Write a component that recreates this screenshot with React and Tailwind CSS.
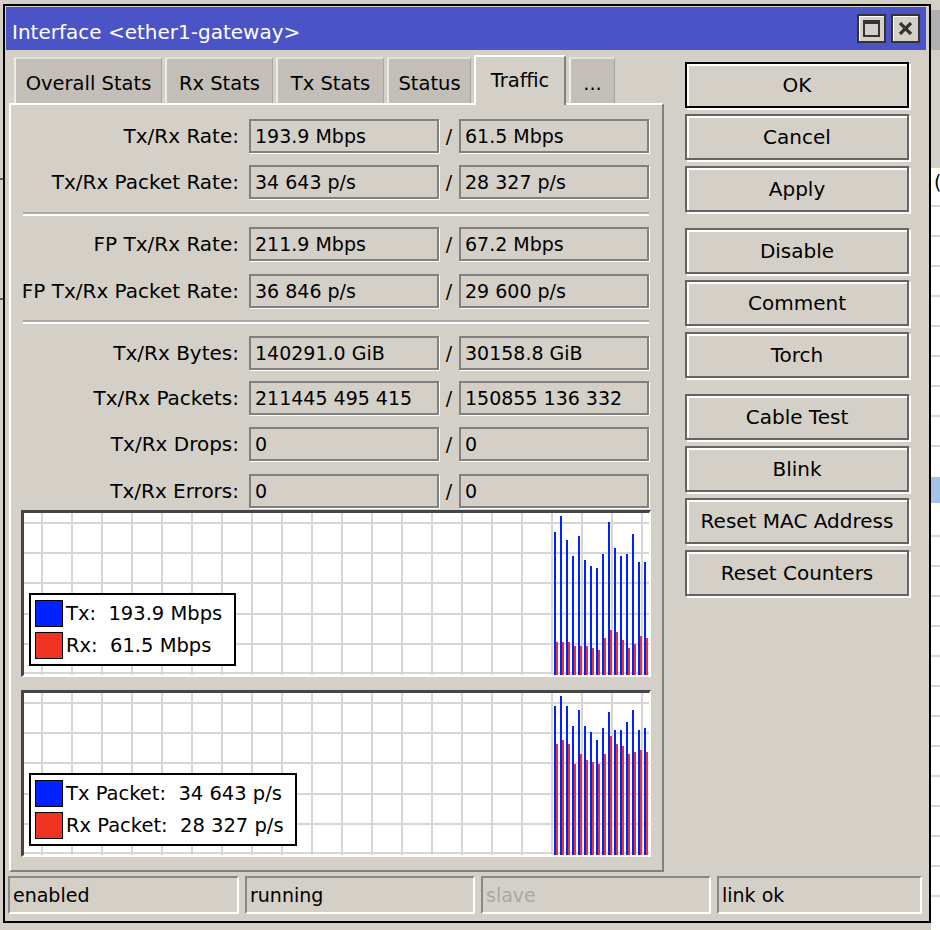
import React from 'react';

const font = { fontFamily: '"DejaVu Sans", Verdana, sans-serif' };

const rows1 = [
  { label: 'Tx/Rx Rate:', a: '193.9 Mbps', b: '61.5 Mbps' },
  { label: 'Tx/Rx Packet Rate:', a: '34 643 p/s', b: '28 327 p/s' },
];
const rows2 = [
  { label: 'FP Tx/Rx Rate:', a: '211.9 Mbps', b: '67.2 Mbps' },
  { label: 'FP Tx/Rx Packet Rate:', a: '36 846 p/s', b: '29 600 p/s' },
];
const rows3 = [
  { label: 'Tx/Rx Bytes:', a: '140291.0 GiB', b: '30158.8 GiB' },
  { label: 'Tx/Rx Packets:', a: '211445 495 415', b: '150855 136 332' },
  { label: 'Tx/Rx Drops:', a: '0', b: '0' },
  { label: 'Tx/Rx Errors:', a: '0', b: '0' },
];

// bar tops in graph-inner coordinates (inner height 162)
const rateTx = [532, 516, 540, 556, 536, 560, 566, 568, 554, 522, 548, 556, 554, 534, 562, 562].map((y) => y - 513);
const rateRx = [642, 642, 642, 646, 646, 646, 648, 650, 638, 630, 632, 640, 648, 644, 636, 638].map((y) => y - 513);
const pktTx = [706, 696, 706, 726, 710, 726, 732, 740, 728, 712, 730, 730, 722, 710, 730, 728].map((y) => y - 693);
const pktRx = [744, 740, 744, 764, 754, 760, 762, 764, 754, 736, 744, 746, 754, 752, 750, 752].map((y) => y - 693);

const tabs = [
  { name: 'Overall Stats', w: 'w-[148px]' },
  { name: 'Rx Stats', w: 'w-[108px]' },
  { name: 'Tx Stats', w: 'w-[108px]' },
  { name: 'Status', w: 'w-[84px]' },
];

function Field({ children }) {
  return (
    <div className="w-[190px] h-[34px] border-2 border-[#808080] shadow-[1px_1px_0_#fff] flex items-center pl-[4px] whitespace-pre text-[19px]">
      {children}
    </div>
  );
}

function Row({ row, className }) {
  return (
    <div className={`flex items-center ${className}`}>
      <div className="w-[228px] text-right text-[20px]">{row.label}</div>
      <div className="ml-[10px]">
        <Field>{row.a}</Field>
      </div>
      <div className="w-[20px] text-center">/</div>
      <Field>{row.b}</Field>
    </div>
  );
}

function Separator({ className }) {
  return <div className={`ml-[12px] w-[626px] h-[2px] bg-[#a8a8a8] shadow-[0_2px_0_#fff] ${className}`} />;
}

function Chart({ tx, rx }) {
  const verticals = Array.from({ length: 21 }, (_, i) => 18 + i * 30);
  const horizontals = [10, 40, 70, 101, 131, 160];
  return (
    <svg width="625" height="162" className="block">
      <rect width="625" height="162" fill="#ffffff" />
      {verticals.map((x) => (
        <line key={'v' + x} x1={x} x2={x} y1="0" y2="162" stroke="#d6d6d6" strokeWidth="2" />
      ))}
      {horizontals.map((y) => (
        <line key={'h' + y} x1="0" x2="625" y1={y} y2={y} stroke="#d6d6d6" strokeWidth="2" />
      ))}
      {tx.map((top, i) => (
        <g key={i}>
          <rect x={530 + i * 6} y={top} width="2" height={162 - top} fill="#0022ff" />
          <rect x={532 + i * 6} y={rx[i]} width="2" height={162 - rx[i]} fill="#ee3322" />
        </g>
      ))}
    </svg>
  );
}

function Graph({ tx, rx, legend, legendW, className }) {
  return (
    <div className={`ml-[10px] w-[630px] h-[167px] border-t-[3px] border-l-[3px] border-t-[#454545] border-l-[#454545] border-b-2 border-r-2 border-b-white border-r-white relative ${className}`}>
      <Chart tx={tx} rx={rx} />
      <div className={`absolute left-[5px] top-[80px] h-[73px] ${legendW} bg-white border-2 border-black flex flex-col justify-center gap-[4px] pl-[4px] text-[19.5px]`}>
        {legend.map((l) => (
          <div key={l.text} className="flex items-center h-[28px]">
            <div className={`w-[28px] h-[27px] border-[1.5px] border-black ${l.color}`} />
            <span className="ml-[3px] whitespace-pre">{l.text}</span>
          </div>
        ))}
      </div>
    </div>
  );
}

function Button({ children, primary, className = '' }) {
  return (
    <div
      className={`h-[46px] w-[224px] flex items-center justify-center text-[20px] border-2 ${
        primary ? 'border-black' : 'border-[#646464]'
      } shadow-[inset_2px_2px_0_#fff,2px_2px_0_#fff] ${className}`}
    >
      {children}
    </div>
  );
}

function StatusCell({ children, w, muted }) {
  return (
    <div
      className={`${w} h-[38px] border-t-2 border-l-2 border-[#888888] border-b-2 border-r-2 border-b-white border-r-white flex items-center pl-[3px] ${
        muted ? 'text-[#a8a8a8]' : 'text-black'
      }`}
    >
      {children}
    </div>
  );
}

export default function App() {
  const bgLines = [205, 235, 265, 295, 325, 355, 385, 415, 445, 535, 565, 595, 625, 655, 685, 715, 745, 775, 805, 835, 865, 895];
  return (
    <div className="w-[940px] h-[930px] bg-[#d4d0c8] flex overflow-hidden text-[19px] text-black" style={font}>
      {/* background window, left edge */}
      <div className="w-[3px] h-full flex flex-col">
        <div className="h-[178px]" />
        <div className="h-[2px] bg-[#606060]" />
        <div className="h-[118px]" />
        <div className="h-[2px] bg-[#606060]" />
      </div>

      {/* main window */}
      <div className="mt-[4px] w-[928px] h-[919px] border-2 border-black p-[1px] flex flex-col">
        {/* title bar */}
        <div className="h-[43px] mr-[2px] bg-[#4a54c7] flex items-center justify-between pl-[6px] pr-[6px]">
          <span className="text-white text-[20px] mt-[6px]">Interface &lt;ether1-gateway&gt;</span>
          <div className="flex gap-[5px]">
            <div className="w-[29px] h-[29px] bg-[#d4d0c8] border-2 border-[#333] shadow-[inset_1px_1px_0_#fff] flex items-center justify-center">
              <div className="w-[17px] h-[17px] border-2 border-t-[4px] border-[#333]" />
            </div>
            <div className="w-[29px] h-[29px] bg-[#d4d0c8] border-2 border-[#333] shadow-[inset_1px_1px_0_#fff] flex items-center justify-center">
              <svg width="15" height="13" viewBox="0 0 15 13">
                <path d="M2 1 L13 12 M13 1 L2 12" stroke="#333" strokeWidth="3.2" />
              </svg>
            </div>
          </div>
        </div>

        {/* body */}
        <div className="flex">
          {/* left column */}
          <div className="ml-[3px] w-[655px] flex flex-col">
            <div className="h-[53px] flex items-end pl-[5px] gap-[3px] text-[19.5px]">
              {tabs.map((t) => (
                <div
                  key={t.name}
                  className={`${t.w} h-[46px] bg-[#c3bfb8] border-t-2 border-l-2 border-t-[#e4e2dc] border-l-[#ecebe6] border-r border-r-[#a8a6a0] flex items-center justify-center pt-[5px]`}
                >
                  {t.name}
                </div>
              ))}
              <div className="w-[92px] h-[50px] bg-[#d4d0c8] border-t-2 border-l-2 border-white border-r-2 border-r-[#808080] flex items-start justify-center pt-[9px] -mb-[2px] relative z-10">
                Traffic
              </div>
              <div className="w-[46px] h-[46px] bg-[#c3bfb8] border-t-2 border-l-2 border-t-[#e4e2dc] border-l-[#ecebe6] border-r border-r-[#a8a6a0] flex items-center justify-center pt-[5px]">
                ...
              </div>
            </div>

            {/* panel */}
            <div className="h-[769px] border-2 border-t-white border-l-white border-r-[#808080] border-b-[#808080] flex flex-col">
              <Row row={rows1[0]} className="mt-[14px]" />
              <Row row={rows1[1]} className="mt-[12px]" />
              <Separator className="mt-[13px]" />
              <Row row={rows2[0]} className="mt-[13px]" />
              <Row row={rows2[1]} className="mt-[13px]" />
              <Separator className="mt-[12px]" />
              <Row row={rows3[0]} className="mt-[14px]" />
              <Row row={rows3[1]} className="mt-[11px]" />
              <Row row={rows3[2]} className="mt-[12px]" />
              <Row row={rows3[3]} className="mt-[13px]" />
              <Graph
                className="mt-[2px]"
                tx={rateTx}
                rx={rateRx}
                legendW="w-[207px]"
                legend={[
                  { color: 'bg-[#0022ff]', text: 'Tx:  193.9 Mbps' },
                  { color: 'bg-[#ee3322]', text: 'Rx:  61.5 Mbps' },
                ]}
              />
              <Graph
                className="mt-[13px]"
                tx={pktTx}
                rx={pktRx}
                legendW="w-[268px]"
                legend={[
                  { color: 'bg-[#0022ff]', text: 'Tx Packet:  34 643 p/s' },
                  { color: 'bg-[#ee3322]', text: 'Rx Packet:  28 327 p/s' },
                ]}
              />
            </div>
          </div>

          {/* right buttons */}
          <div className="ml-[21px] pt-[12px] flex flex-col">
            <div className="flex flex-col gap-[6px]">
              <Button primary>OK</Button>
              <Button>Cancel</Button>
              <Button>Apply</Button>
            </div>
            <div className="flex flex-col gap-[6px] mt-[16px]">
              <Button>Disable</Button>
              <Button>Comment</Button>
              <Button>Torch</Button>
            </div>
            <div className="flex flex-col gap-[6px] mt-[16px]">
              <Button>Cable Test</Button>
              <Button>Blink</Button>
              <Button>Reset MAC Address</Button>
              <Button>Reset Counters</Button>
            </div>
          </div>
        </div>

        {/* status bar */}
        <div className="mt-[4px] ml-[2px] flex gap-[6px]">
          <StatusCell w="w-[231px]">enabled</StatusCell>
          <StatusCell w="w-[230px]">running</StatusCell>
          <StatusCell w="w-[230px]" muted>slave</StatusCell>
          <StatusCell w="w-[205px]">link ok</StatusCell>
        </div>
      </div>

      {/* background window, right edge */}
      <div className="flex-1 h-full flex flex-col">
        <div className="h-[10px]" />
        <div className="h-[40px] bg-[#b0b0b0]" />
        <div className="h-[118px]" />
        <div className="h-[762px] bg-white relative overflow-hidden">
          <span className="absolute left-[3px] top-[0px] text-[19px]">(</span>
          {bgLines.map((y) => (
            <div key={y} className="absolute left-0 right-0 h-[2px] bg-[#d8d8d8]" style={{ top: y - 168 }} />
          ))}
          <div className="absolute left-0 right-0 top-[309px] h-[26px] bg-[#a6c2e8]" />
        </div>
      </div>
    </div>
  );
}
